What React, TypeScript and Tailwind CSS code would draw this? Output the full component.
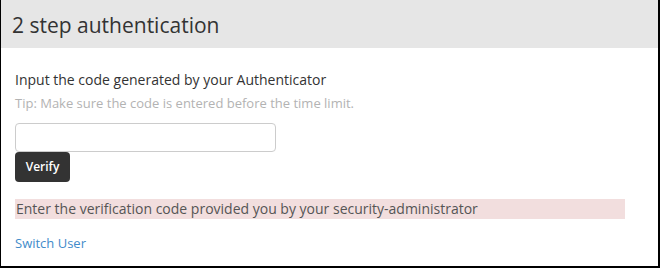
import React from "react";

export default function App() {
  return (
    <div
      className="w-[660px] h-[268px] bg-white border-l border-r-2 border-b-2 border-black"
      style={{ fontFamily: '"Open Sans", "Noto Sans", sans-serif' }}
    >
      <div className="h-[48px] bg-[#e6e6e6] flex items-center pl-[11px] pt-[2px]">
        <h1 className="text-[21px] leading-[28px] text-[#333333] font-normal">2 step authentication</h1>
      </div>
      <div className="pl-[14px] pt-[22px]">
        <p className="text-[14px] leading-[20px] text-[#333333]">
          Input the code generated by your Authenticator
        </p>
        <p className="mt-[4px] text-[13px] leading-[18px] text-[#b3b3b3]">
          Tip: Make sure the code is entered before the time limit.
        </p>
        <input
          type="text"
          className="mt-[11px] block w-[261px] h-[29px] border border-[#cccccc] rounded-[4px] bg-white outline-none"
        />
        <button className="block w-[55px] h-[30px] bg-[#333333] text-white text-[12px] font-semibold rounded-[4px]">
          Verify
        </button>
        <div className="mt-[17px] w-[610px] h-[20px] bg-[#f2dede] pl-[1px] text-[14px] leading-[20px] text-[#555555]">
          Enter the verification code provided you by your security-administrator
        </div>
        <a href="#" className="mt-[15px] block w-fit text-[13px] leading-[18px] text-[#428bca]">
          Switch User
        </a>
      </div>
    </div>
  );
}
